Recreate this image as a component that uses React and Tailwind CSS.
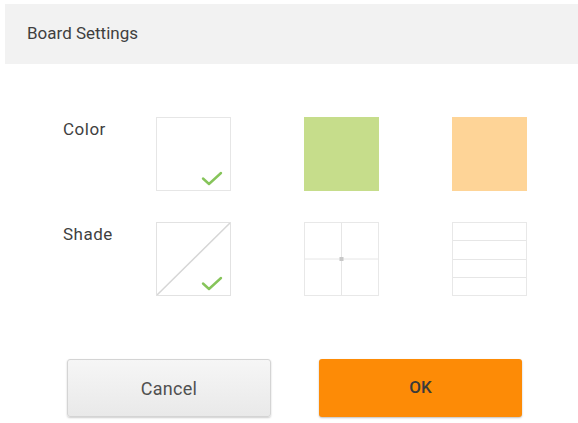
import React from "react";

function Check() {
  return (
    <svg className="absolute right-[7px] bottom-[4px]" width="22" height="16" viewBox="0 0 22 16" fill="none">
      <path d="M2 8.5 L8 14 L20 3" stroke="#86c45a" strokeWidth="2.4" strokeLinecap="round" strokeLinejoin="round" />
    </svg>
  );
}

function Swatch({ className = "", children }) {
  return <div className={"relative h-[74px] w-[75px] " + className}>{children}</div>;
}

export default function App() {
  return (
    <div className="h-[423px] w-[578px] overflow-hidden bg-white pt-[4px] font-['Roboto',sans-serif]">
      {/* header */}
      <div className="ml-[5px] flex h-[60px] items-center bg-[#f2f2f2] pl-[22px] text-[17px] text-[#3f3f3f]">
        Board Settings
      </div>

      <div className="mt-[53px] flex flex-col gap-[31px] pl-[63px]">
        {/* color row */}
        <div className="flex">
          <div className="w-[93px] text-[17px] tracking-[0.5px] text-[#3f3f3f]">Color</div>
          <div className="flex gap-[73px]">
            <Swatch className="border border-[#e6e6e6] bg-white">
              <Check />
            </Swatch>
            <Swatch className="bg-[#c6dd8b]" />
            <Swatch className="bg-[#fed497]" />
          </div>
        </div>

        {/* shade row */}
        <div className="flex">
          <div className="w-[93px] text-[17px] tracking-[0.5px] text-[#3f3f3f]">Shade</div>
          <div className="flex gap-[73px]">
            <Swatch className="border border-[#e2e2e2] bg-white">
              <svg className="absolute inset-0" width="73" height="72" viewBox="0 0 73 72">
                <line x1="0" y1="72" x2="73" y2="0" stroke="#d6d6d6" strokeWidth="1.5" />
              </svg>
              <Check />
            </Swatch>
            <Swatch className="border border-[#e8e8e8] bg-white">
              <svg className="absolute inset-0" width="73" height="72" viewBox="0 0 73 72">
                <line x1="0" y1="36" x2="73" y2="36" stroke="#e6e6e6" strokeWidth="1" />
                <line x1="36.5" y1="0" x2="36.5" y2="72" stroke="#e6e6e6" strokeWidth="1" />
                <rect x="34.5" y="34" width="4" height="4" fill="#c8c8c8" />
              </svg>
            </Swatch>
            <Swatch className="flex flex-col border border-[#e8e8e8] bg-white">
              <div className="flex-1 border-b border-[#e6e6e6]" />
              <div className="flex-1 border-b border-[#e6e6e6]" />
              <div className="flex-1 border-b border-[#e6e6e6]" />
              <div className="flex-1" />
            </Swatch>
          </div>
        </div>
      </div>

      {/* buttons */}
      <div className="mt-[63px] flex gap-[48px] pl-[67px]">
        <button className="flex h-[58px] w-[204px] items-center justify-center rounded-[3px] border border-[#d4d4d4] bg-gradient-to-b from-[#f6f6f6] to-[#e9e9e9] text-[18px] tracking-[0.3px] text-[#505050] shadow-[0_1px_2px_rgba(0,0,0,0.2)]">
          Cancel
        </button>
        <button className="flex h-[58px] w-[203px] items-center justify-center rounded-[3px] bg-[#fd8b06] text-[17px] font-medium text-[#3a3a3a] shadow-[0_1px_2px_rgba(0,0,0,0.25)]">
          OK
        </button>
      </div>
    </div>
  );
}
